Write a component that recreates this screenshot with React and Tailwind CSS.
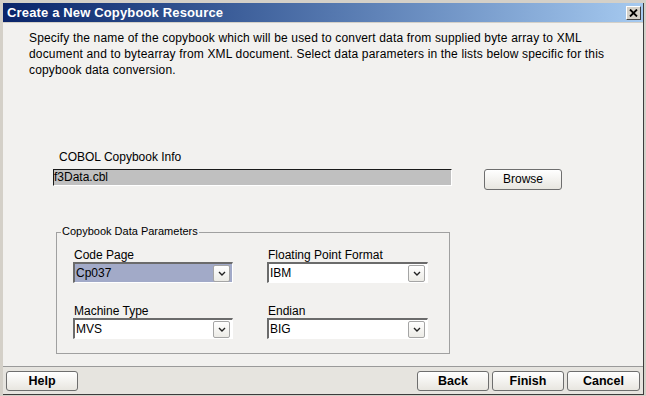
import React from 'react';

const sans = { fontFamily: '"Liberation Sans", Arial, sans-serif' };

const Combo = ({ value, selected, width }) => (
  <div className={`${width} h-[21px] flex border-t-2 border-l-2 border-t-[#6b6b6b] border-l-[#6b6b6b] border-b border-r border-b-white border-r-white ${selected ? 'bg-[#a2aac8]' : 'bg-white'}`}>
    <div className="flex-1 text-[12px] leading-[18px] pl-[1px] text-black">{value}</div>
    <div className="w-[17px] h-[17px] mt-[1px] mr-[2px] rounded-[2px] border border-[#a5a5a5] bg-gradient-to-b from-white to-[#ecebe6] flex items-center justify-center">
      <svg width="8" height="5" viewBox="0 0 8 5">
        <path d="M1 1 L4 4 L7 1" stroke="#222" strokeWidth="1.4" fill="none" />
      </svg>
    </div>
  </div>
);

const Btn = ({ label, w = 'w-[72px]' }) => (
  <button className={`${w} h-[20px] rounded-[3px] border border-[#6e6e6e] bg-gradient-to-b from-white to-[#e8e6e0] text-[12.5px] font-bold leading-[18px] text-black`}>
    {label}
  </button>
);

const App = () => {
  return (
    <div style={sans} className="w-[646px] h-[396px] bg-[#d4d0c8] pt-[3px] pl-[3px] pr-[2px] pb-[1px] flex flex-col">
      <div className="flex-1 flex flex-col border-r border-b border-[#3c3c3c]">
        {/* title bar */}
        <div className="h-[19px] flex items-center justify-between bg-gradient-to-r from-[#0a246a] to-[#a6caf0] pl-[4px] pr-[2px]">
          <span className="text-white font-bold text-[13px] tracking-[0.15px] leading-[19px]">Create a New Copybook Resource</span>
          <div className="w-[15px] h-[14px] bg-[#d4d0c8] border border-t-white border-l-white border-b-[#404040] border-r-[#404040] flex items-center justify-center">
            <svg width="9" height="8" viewBox="0 0 9 8">
              <path d="M1 0.5 L8 7.5 M8 0.5 L1 7.5" stroke="#000" strokeWidth="1.8" />
            </svg>
          </div>
        </div>

        {/* content */}
        <div className="h-[343px] mt-[1px] bg-[#f2f1ef] flex flex-col">
          <p className="ml-[26px] mt-[7px] text-[12px] leading-[16px] tracking-[0.16px] text-black whitespace-nowrap">
            Specify the name of the copybook which will be used to convert data from supplied byte array to XML<br />
            document and to bytearray from XML document. Select data parameters in the lists below specific for this<br />
            copybook data conversion.
          </p>

          <div className="ml-[56px] mt-[72px] text-[12px] leading-[14px] text-black">COBOL Copybook Info</div>

          <div className="flex items-start mt-[5px] ml-[50px]">
            <div className="w-[399px] h-[17px] bg-[#c0c0c0] border-t border-l border-[#1a1a1a] border-b border-r border-b-white border-r-white text-[12px] leading-[15px] text-black">
              f3Data.cbl
            </div>
            <button className="ml-[32px] w-[78px] h-[21px] rounded-[3px] border border-[#6e6e6e] bg-gradient-to-b from-white to-[#e8e6e0] text-[12px] leading-[19px] text-black">
              Browse
            </button>
          </div>

          <div className="relative ml-[53px] mt-[42px] w-[394px] h-[122px] border border-[#a0a0a0]">
            <span className="absolute left-[4px] top-[-8px] px-[1px] bg-[#f2f1ef] text-[11px] leading-[13px] text-black">
              Copybook Data Parameters
            </span>
            <div className="grid grid-cols-[160px_161px] gap-x-[34px] gap-y-[22px] pl-[16px] pt-[16px]">
              <div className="flex flex-col">
                <div className="text-[12px] leading-[13px] pl-[1px] text-black">Code Page</div>
                <Combo value="Cp037" selected width="w-[160px]" />
              </div>
              <div className="flex flex-col">
                <div className="text-[12px] leading-[13px] pl-[1px] text-black">Floating Point Format</div>
                <Combo value="IBM" width="w-[161px]" />
              </div>
              <div className="flex flex-col">
                <div className="text-[12px] leading-[13px] pl-[1px] text-black">Machine Type</div>
                <Combo value="MVS" width="w-[160px]" />
              </div>
              <div className="flex flex-col">
                <div className="text-[12px] leading-[13px] pl-[1px] text-black">Endian</div>
                <Combo value="BIG" width="w-[161px]" />
              </div>
            </div>
          </div>
        </div>

        {/* footer */}
        <div className="flex-1 bg-[#e6e4df] border-t border-[#9a9a9a] flex items-start pt-[4px] pl-[3px] pr-[3px]">
          <Btn label="Help" />
          <div className="ml-auto flex gap-[3px]">
            <Btn label="Back" />
            <Btn label="Finish" />
            <Btn label="Cancel" w="w-[73px]" />
          </div>
        </div>
      </div>
    </div>
  );
};

export default App;
